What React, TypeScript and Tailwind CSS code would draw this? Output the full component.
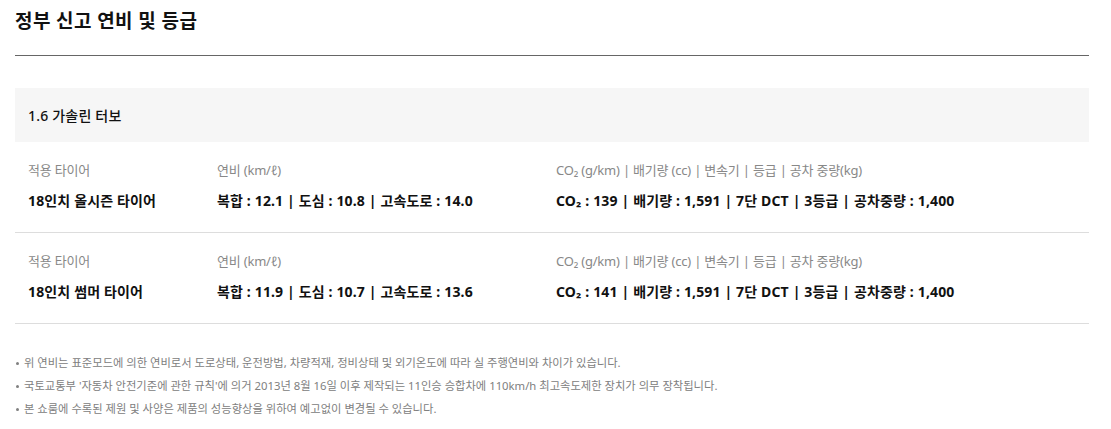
const font = { fontFamily: '"Noto Sans", "Noto Sans CJK KR", sans-serif' };

type Row = {
  tire: string;
  fuel: string;
  spec: string;
};

const rows: Row[] = [
  {
    tire: "18인치 올시즌 타이어",
    fuel: "복합 : 12.1 | 도심 : 10.8 | 고속도로 : 14.0",
    spec: "CO₂ : 139 | 배기량 : 1,591 | 7단 DCT | 3등급 | 공차중량 : 1,400",
  },
  {
    tire: "18인치 썸머 타이어",
    fuel: "복합 : 11.9 | 도심 : 10.7 | 고속도로 : 13.6",
    spec: "CO₂ : 141 | 배기량 : 1,591 | 7단 DCT | 3등급 | 공차중량 : 1,400",
  },
];

const notes = [
  "위 연비는 표준모드에 의한 연비로서 도로상태, 운전방법, 차량적재, 정비상태 및 외기온도에 따라 실 주행연비와 차이가 있습니다.",
  "국토교통부 '자동차 안전기준에 관한 규칙'에 의거 2013년 8월 16일 이후 제작되는 11인승 승합차에 110km/h 최고속도제한 장치가 의무 장착됩니다.",
  "본 쇼룸에 수록된 제원 및 사양은 제품의 성능향상을 위하여 예고없이 변경될 수 있습니다.",
];

export default function App() {
  return (
    <div className="w-[1111px] h-[429px] bg-white px-[15px] pr-[22px]" style={font}>
      <h2 className="pt-[6px] pb-[19px] text-[19px] font-bold leading-[30px] tracking-[0.4px] text-[#111]">
        정부 신고 연비 및 등급
      </h2>
      <div className="h-px bg-[#666]" />

      <div className="mt-[32px] flex h-[54px] items-center bg-[#f6f6f6] px-[13px] text-[14px] font-medium tracking-[0.2px] text-[#111]">
        1.6 가솔린 터보
      </div>

      {rows.map((row) => (
        <div key={row.tire} className="border-b border-[#dddddd]">
          <div className="flex px-[13px] pt-[18px] pb-[21px]">
            <div className="w-[189px]">
              <p className="text-[13px] leading-[20px] tracking-[-0.2px] text-[#888]">적용 타이어</p>
              <p className="mt-[11px] text-[14px] font-bold leading-[20px] tracking-[0.15px] text-[#111]">
                {row.tire}
              </p>
            </div>
            <div className="w-[339px]">
              <p className="text-[13px] leading-[20px] tracking-[-0.2px] text-[#888]">연비 (km/ℓ)</p>
              <p className="mt-[11px] text-[14px] font-bold leading-[20px] tracking-[0.15px] text-[#111]">
                {row.fuel}
              </p>
            </div>
            <div className="flex-1">
              <p className="text-[13px] leading-[20px] tracking-[-0.2px] text-[#888]">
                CO₂ (g/km) | 배기량 (cc) | 변속기 | 등급 | 공차 중량(kg)
              </p>
              <p className="mt-[11px] text-[14px] font-bold leading-[20px] tracking-[0.15px] text-[#111]">
                {row.spec}
              </p>
            </div>
          </div>
        </div>
      ))}

      <ul className="mt-[30px] flex flex-col gap-[5px]">
        {notes.map((note) => (
          <li key={note} className="flex items-center text-[11.3px] leading-[18px] text-[#808080]">
            <span className="mr-[5px] ml-[1px] inline-block size-[3px] rounded-full bg-[#808080]" />
            {note}
          </li>
        ))}
      </ul>
    </div>
  );
}
